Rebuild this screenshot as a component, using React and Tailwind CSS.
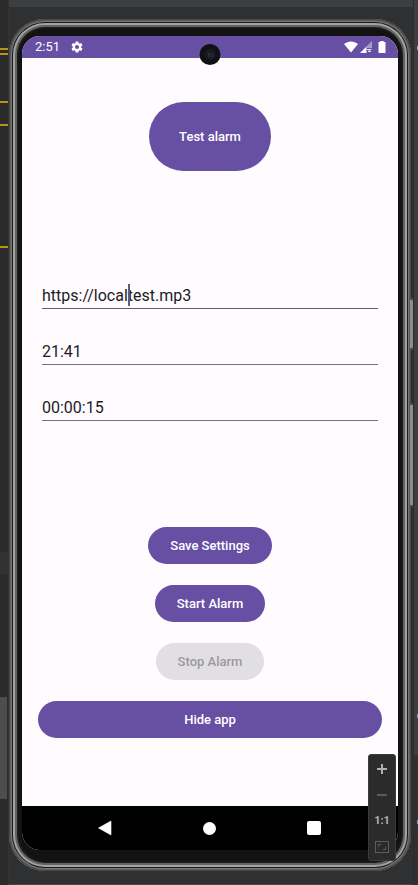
import { useState } from "react";

const buttonBase =
  "flex items-center justify-center rounded-full font-medium text-[13px] leading-4 h-[37px]";
const filled = "bg-[#6750a3] text-white";

function Field({ label, value, onChange, active }) {
  return (
    <div className="relative">
      <input
        type="text"
        aria-label={label}
        value={value}
        onChange={(e) => onChange(e.target.value)}
        className={`block h-8 w-full border-b bg-transparent pt-[6px] text-base leading-normal text-[#1c1b1f] outline-none ${
          active ? "border-[#625b71]" : "border-[#79747e]"
        }`}
      />
      {active && <span className="absolute left-[86px] top-[7px] h-[22px] w-[2px] bg-[#625b71]" />}
    </div>
  );
}

function StatusBar() {
  return (
    <header className="relative flex h-[22px] items-center bg-[#6750a3] pl-[13px] pr-3 text-white">
      <span className="text-[13px] leading-4">2:51</span>
      <svg viewBox="0 0 24 24" className="ml-[10px] size-[14px]" fill="currentColor" aria-hidden="true">
        <path d="M19.14 12.94c.04-.3.06-.61.06-.94 0-.32-.02-.64-.07-.94l2.03-1.58a.49.49 0 0 0 .12-.61l-1.92-3.32a.49.49 0 0 0-.59-.22l-2.39.96a7 7 0 0 0-1.62-.94l-.36-2.54a.48.48 0 0 0-.48-.41h-3.84a.47.47 0 0 0-.47.41l-.36 2.54c-.59.24-1.13.57-1.62.94l-2.39-.96a.48.48 0 0 0-.59.22L2.74 8.87a.48.48 0 0 0 .12.61l2.03 1.58a6 6 0 0 0-.02 1.88l-2.03 1.58a.49.49 0 0 0-.12.61l1.92 3.32c.12.22.37.29.59.22l2.39-.96c.5.38 1.03.7 1.62.94l.36 2.54c.05.24.24.41.48.41h3.84c.24 0 .44-.17.47-.41l.36-2.54a7 7 0 0 0 1.62-.94l2.39.96c.22.08.47 0 .59-.22l1.92-3.32a.47.47 0 0 0-.12-.61l-2.01-1.58zM12 15.6a3.6 3.6 0 1 1 0-7.2 3.6 3.6 0 0 1 0 7.2z" />
      </svg>
      <svg viewBox="0 0 14 12" className="ml-auto h-3 w-[14px]" fill="currentColor" aria-hidden="true">
        <path d="M0 3C4-.4 10-.4 14 3L7 11.600z" />
      </svg>
      <svg viewBox="0 0 12 12" className="ml-[2px] size-3" aria-hidden="true">
        <path d="M6.500 5.500V12H0z" fill="#fff" />
        <path d="M12 0v7H6.500V5.500z" fill="#a99bcb" />
        <path d="M7 8.500h4.500M8 10.500h3" stroke="#e8e2f3" strokeWidth="1" />
        <path d="M9.300 8v3" stroke="#e8e2f3" strokeWidth="1" />
      </svg>
      <svg viewBox="0 0 8 12" className="ml-[6px] h-3 w-2" fill="currentColor" aria-hidden="true">
        <path d="M2.300 0h3.400v1H7.500v11H.5V1h1.800z" />
      </svg>
      <span className="absolute left-1/2 top-2 flex size-[21px] -translate-x-1/2 items-center justify-center rounded-full bg-[#101112]">
        <span className="flex size-[11px] items-center justify-center gap-[2px] rounded-full bg-[#191b1d]">
          <span className="h-1 w-px bg-[#33474d]" />
          <span className="h-1 w-px bg-[#2b3560]" />
        </span>
      </span>
    </header>
  );
}

function NavBar() {
  return (
    <nav className="flex h-11 items-center justify-between bg-black pl-[76px] pr-[77px]">
      <button aria-label="Back">
        <svg viewBox="0 0 14 16" className="h-4 w-[14px]" fill="#fff">
          <path d="M13 1v14L.500 8z" stroke="#fff" strokeWidth=".6" strokeLinejoin="round" />
        </svg>
      </button>
      <button aria-label="Home" className="size-[13px] rounded-full bg-white" />
      <button aria-label="Overview" className="size-[14px] rounded-[2px] bg-white" />
    </nav>
  );
}

function ZoomPanel() {
  const cell = "flex h-[26px] items-center justify-center";
  return (
    <div className="absolute bottom-[10px] right-[15px] flex w-7 flex-col rounded-[3px] border border-[#3a3b3c] bg-[#2b2b2b] pt-px">
      <button aria-label="Zoom in" className={cell}>
        <svg viewBox="0 0 10 10" className="size-[10px]" stroke="#afb1b3" strokeWidth="2">
          <path d="M5 0v10M0 5h10" />
        </svg>
      </button>
      <button aria-label="Zoom out" className={cell}>
        <svg viewBox="0 0 10 10" className="size-[10px]" stroke="#5a5c5d" strokeWidth="2">
          <path d="M0 5h10" />
        </svg>
      </button>
      <button className={`${cell} text-[11px] font-bold leading-4 text-[#afb1b3]`}>1:1</button>
      <button aria-label="Fit to window" className={cell}>
        <svg viewBox="0 0 14 12" className="h-3 w-[14px]" fill="none" stroke="#5a5c5d">
          <rect x=".5" y=".5" width="13" height="11" />
          <path d="M3.500 6V3.500H6M10.500 6v2.500H8" />
        </svg>
      </button>
    </div>
  );
}

function EditorGutter() {
  return (
    <div className="relative w-[9px] shrink-0 border-r border-[#323334] bg-[#2b2b2b]">
      <span className="absolute inset-x-0 top-12 h-[2px] bg-[#be9117]" />
      <span className="absolute inset-x-0 top-[53px] h-[2px] bg-[#be9117]" />
      <span className="absolute inset-x-0 top-[101px] h-[2px] bg-[#be9117]" />
      <span className="absolute inset-x-0 top-[124px] h-[2px] bg-[#be9117]" />
      <span className="absolute inset-x-0 top-[246px] h-[2px] bg-[#be9117]" />
      <span className="absolute inset-x-0 top-[552px] h-[22px] bg-[#323232]" />
      <span className="absolute left-0 top-[697px] h-[102px] w-[7px] bg-[#4d4d4d]" />
    </div>
  );
}

function Screen() {
  const [url, setUrl] = useState("https://localtest.mp3");
  const [time, setTime] = useState("21:41");
  const [duration, setDuration] = useState("00:00:15");

  return (
    <div className="overflow-hidden rounded-[18px] bg-[#fffbff]">
      <StatusBar />
      <main className="flex flex-col px-4 pb-[68px] pt-11">
        <button
          className={`flex h-[69px] w-[122px] items-center justify-center self-center rounded-full text-[13px] font-medium leading-4 ${filled}`}
        >
          Test alarm
        </button>
        <div className="mt-[106px] flex flex-col gap-6 px-1">
          <Field label="Sound URL" value={url} onChange={setUrl} active />
          <Field label="Start time" value={time} onChange={setTime} />
          <Field label="Duration" value={duration} onChange={setDuration} />
        </div>
        <div className="mt-[106px] flex flex-col items-center gap-[21px]">
          <button className={`${buttonBase} ${filled} px-[22px]`}>Save Settings</button>
          <button className={`${buttonBase} ${filled} px-[22px]`}>Start Alarm</button>
          <button disabled className={`${buttonBase} bg-[#e2dfe3] px-[22px] text-[#9b999d]`}>
            Stop Alarm
          </button>
          <button className={`${buttonBase} ${filled} w-full`}>Hide app</button>
        </div>
      </main>
      <NavBar />
    </div>
  );
}

export default function App() {
  return (
    <div className="flex min-h-screen bg-[#2f3032] font-['Roboto',sans-serif]">
      <EditorGutter />
      <div className="flex min-w-0 flex-1 flex-col border-b border-[#44484b]">
        <div className="h-[7px] bg-[#3c3f41]" />
        <div className="relative mr-[2px] mt-3 rounded-[36px] bg-[#121212] px-[13px] pb-[21px] pt-[17px] shadow-[inset_0_0_0_1px_#484848,inset_0_0_0_2px_#5c5c5c,inset_0_0_0_3px_#777777,inset_0_0_0_4px_#1a1a1a,inset_0_0_0_6px_#a4a2a0,inset_0_0_0_8px_#626262,inset_0_0_3px_9px_#242424]">
          <span className="absolute -right-[3px] top-[279px] h-[52px] w-1 border-y-2 border-r border-[#4c4c4b] bg-[#8f8c88]" />
          <span className="absolute -right-[3px] top-[384px] h-[104px] w-1 border-y-2 border-r border-[#4c4c4b] bg-[#8f8c88]" />
          <Screen />
          <ZoomPanel />
        </div>
      </div>
      <div className="relative flex w-[5px] shrink-0 flex-col border-l border-[#2b2b2b]">
        <div className="h-[755px] bg-[#3c3f41]" />
        <span className="absolute right-0 top-[46px] h-1 w-px bg-[#8ea6cf]" />
        <span className="absolute right-0 top-[714px] h-1 w-px bg-[#7a92f0]" />
        <span className="absolute right-0 top-[820px] h-1 w-px bg-[#7a92f0]" />
      </div>
    </div>
  );
}
